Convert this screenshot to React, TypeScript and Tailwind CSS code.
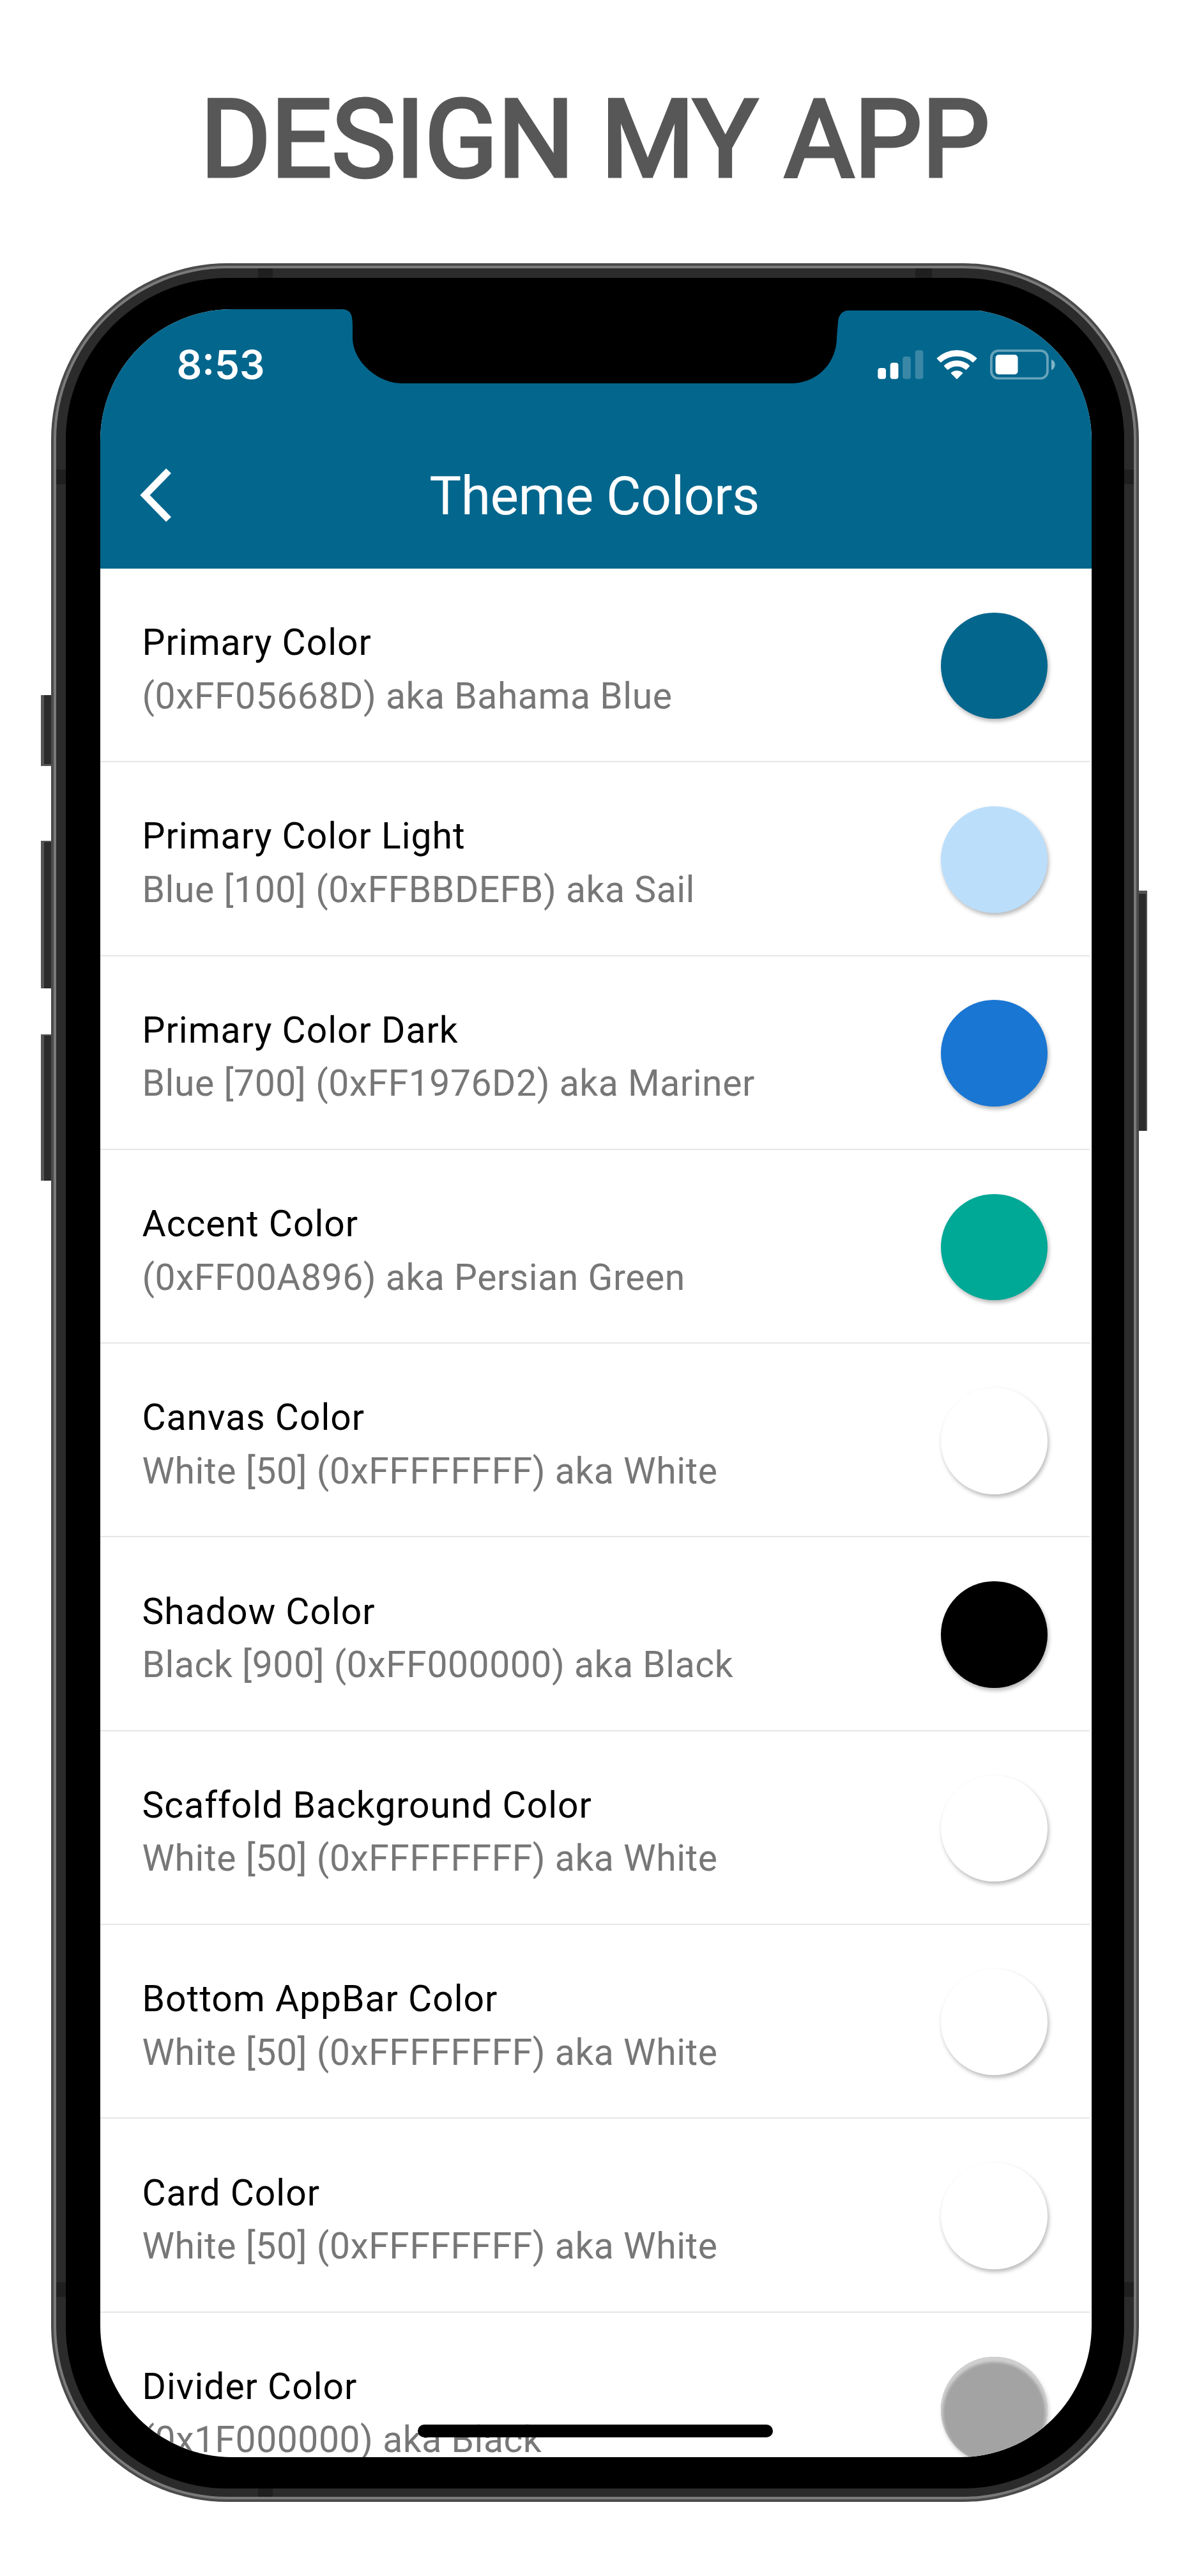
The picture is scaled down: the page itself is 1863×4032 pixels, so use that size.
import React from "react";

type Row = { name: string; detail: string; swatch: string };

const raised = "shadow-[2px_4px_6px_rgba(0,0,0,0.28)]";

const rows: Row[] = [
  { name: "Primary Color", detail: "(0xFF05668D) aka Bahama Blue", swatch: `bg-[#03668d] ${raised}` },
  { name: "Primary Color Light", detail: "Blue [100] (0xFFBBDEFB) aka Sail", swatch: `bg-[#bbdefb] ${raised}` },
  { name: "Primary Color Dark", detail: "Blue [700] (0xFF1976D2) aka Mariner", swatch: `bg-[#1976d2] ${raised}` },
  { name: "Accent Color", detail: "(0xFF00A896) aka Persian Green", swatch: `bg-[#00a896] ${raised}` },
  { name: "Canvas Color", detail: "White [50] (0xFFFFFFFF) aka White", swatch: `bg-white ${raised}` },
  { name: "Shadow Color", detail: "Black [900] (0xFF000000) aka Black", swatch: `bg-black ${raised}` },
  { name: "Scaffold Background Color", detail: "White [50] (0xFFFFFFFF) aka White", swatch: `bg-white ${raised}` },
  { name: "Bottom AppBar Color", detail: "White [50] (0xFFFFFFFF) aka White", swatch: `bg-white ${raised}` },
  { name: "Card Color", detail: "White [50] (0xFFFFFFFF) aka White", swatch: `bg-white ${raised}` },
  {
    name: "Divider Color",
    detail: "(0x1F000000) aka Black",
    swatch: "bg-[#a3a3a3] shadow-[inset_0_5px_4px_3px_#d0d0d0,2px_4px_6px_rgba(0,0,0,0.2)]",
  },
];

function Signal() {
  return (
    <svg width="72" height="47" viewBox="0 0 72 47" fill="#fff">
      <rect x="0.300" y="29" width="12.700" height="17.300" rx="4" />
      <rect x="19.700" y="20.700" width="12.700" height="25.600" rx="4" />
      <rect x="39.200" y="11" width="12.700" height="35.300" rx="4" opacity="0.22" />
      <rect x="58.700" y="1.300" width="12.700" height="45" rx="4" opacity="0.22" />
    </svg>
  );
}

function Wifi() {
  return (
    <svg width="64" height="47" viewBox="0 0 64 47" fill="#fff">
      <path d="M1 13.300A45 45 0 0 1 63 13.300Q63.600 14 63 14.700L57.800 20Q57.200 20.600 56.500 20A37 37 0 0 0 7.500 20Q6.800 20.600 6.200 20L1 14.700Q0.400 14 1 13.300Z" />
      <path d="M12.200 25A29.500 29.500 0 0 1 51.800 25Q52.400 25.700 51.800 26.400L47 31.600Q46.300 32.200 45.600 31.600A20.500 20.500 0 0 0 18.400 31.600Q17.700 32.200 17 31.600L12.200 26.400Q11.600 25.700 12.200 25Z" />
      <path d="M23 36.200A14.500 14.500 0 0 1 41 36.200Q41.600 36.900 41 37.600L32.700 46Q32 46.700 31.300 46L23 37.600Q22.400 36.900 23 36.200Z" />
    </svg>
  );
}

function Battery() {
  return (
    <svg width="102" height="47" viewBox="0 0 102 47">
      <rect x="1.900" y="1.900" width="88" height="43.400" rx="11" fill="none" stroke="#fff" strokeWidth="3.800" opacity="0.4" />
      <rect x="8.500" y="8.200" width="35" height="30.800" rx="5" fill="#fff" />
      <path d="M96 15.500Q101.700 18.500 101.700 23.700Q101.700 29 96 32.500Z" fill="#fff" opacity="0.5" />
    </svg>
  );
}

export default function App() {
  return (
    <div className="flex h-[4032px] w-[1863px] flex-col overflow-hidden bg-white font-[Roboto,sans-serif]">
      <h1 className="flex h-[412px] w-full items-start justify-center pt-[120px] text-[168px] leading-[197px] font-normal whitespace-nowrap text-[#575757] [-webkit-text-stroke:5.2px_#575757]">
        DESIGN MY APP
      </h1>

      <div className="flex h-[3504px] pl-16">
        {/* Mute switch and volume keys */}
        <div className="flex w-4 flex-col pt-[676px]">
          <div className="h-[111px] border-b-3 border-l-5 border-[#555] bg-[#2b2b2b]" />
          <div className="mt-[117px] h-[231px] border-t-2 border-l-5 border-[#555] bg-[#2b2b2b]" />
          <div className="mt-[72px] h-[229px] border-t-2 border-l-5 border-[#555] bg-[#2b2b2b]" />
        </div>

        <div className="h-full w-[1703px] rounded-[276px] bg-[#4b4b4b] p-[4px]">
          <div className="h-full w-full rounded-[272px] bg-[#7a7a7a] p-[4px]">
            <div className="relative h-full w-full rounded-[268px] bg-[#2b2b2b] px-[15px] pt-[15px] pb-[13px]">
              {/* Antenna bands */}
              <div className="absolute inset-x-0 top-[315px] h-[23px] bg-[#1f1f1f]" />
              <div className="absolute inset-x-0 bottom-[313px] h-[23px] bg-[#1f1f1f]" />
              <div className="absolute inset-y-0 left-[316px] w-[23px] bg-[#1f1f1f]" />
              <div className="absolute top-0 right-[316px] h-4 w-[26px] bg-[#1f1f1f]" />

              <div className="relative h-full w-full rounded-[253px] bg-black pt-[49px] pr-[51.5px] pb-[49.5px] pl-[53.5px]">
                <div className="relative h-full w-full overflow-hidden rounded-[206px] bg-white">
                  <header className="flex h-[406px] flex-col bg-[#03668d] text-white">
                    <div className="flex h-[175px] items-start justify-between pt-[62.5px] pr-[57px] pl-[120px]">
                      <span className="font-[Inter,sans-serif] text-[62px] leading-[47px] font-semibold">8:53</span>
                      <div className="flex items-start gap-5">
                        <Signal />
                        <Wifi />
                        <Battery />
                      </div>
                    </div>
                    <div className="grid h-[231px] grid-cols-[1fr_auto_1fr] items-center px-[62px]">
                      <svg width="50" height="84" viewBox="0 0 50 84">
                        <path d="M45 4L8 42L45 80" fill="none" stroke="#fff" strokeWidth="11" />
                      </svg>
                      <span className="pt-1 pr-1 text-[84px] leading-[100px] tracking-[-0.5px]">Theme Colors</span>
                    </div>
                  </header>

                  <main>
                    {rows.map((row) => (
                      <div
                        key={row.name}
                        className="mr-[3px] flex h-[303.3px] items-center justify-between border-b-2 border-[#e6e6e6] px-[66px] pt-[3px]"
                      >
                        <div className="pt-[11px] text-[57px] leading-[83.5px] whitespace-nowrap">
                          <div className="tracking-[1px] text-black">{row.name}</div>
                          <div className="tracking-[0.55px] text-[#777]">{row.detail}</div>
                        </div>
                        <div className={`size-[166.5px] rounded-full ${row.swatch}`} />
                      </div>
                    ))}
                  </main>
                  <div className="absolute bottom-[31px] left-[497px] h-5 w-[556px] rounded-full bg-black" />
                </div>

                {/* Display notch */}
                <svg className="absolute top-[48px] left-[430px]" width="1010" height="120" viewBox="0 0 1010 120">
                  <path d="M0 0V1C16 1 19 8 19 28V45C19 84 60 117 96 117H704C748 117 777 84 777 45L779 20C780 10 786 3 795 3H1010V0Z" fill="#000" />
                </svg>
              </div>
            </div>
          </div>
        </div>

        {/* Side key */}
        <div className="w-[13px] pt-[982px]">
          <div className="h-[376px] border-t-5 border-r-2 border-[#555] bg-[#2b2b2b]" />
        </div>
      </div>
    </div>
  );
}
